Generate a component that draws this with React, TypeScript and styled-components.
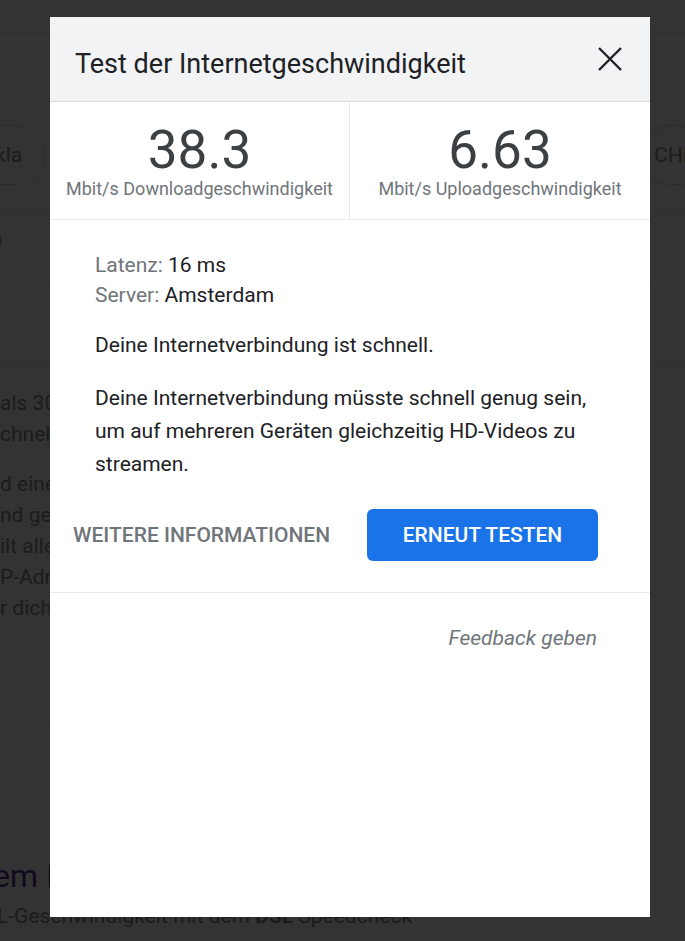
import styled, { createGlobalStyle } from 'styled-components';

const GlobalStyle = createGlobalStyle`
  html, body {
    margin: 0;
    padding: 0;
    background: #ffffff;
    font-family: Roboto, "Liberation Sans", Arial, sans-serif;
  }
  * {
    box-sizing: border-box;
  }
`;

// page behind the dialog
const Page = styled.div`
  width: 685px;
  height: 941px;
  overflow: hidden;
  background: #ffffff;
  color: #8a8a8a;
`;

const Band = styled.div<{ $h: number }>`
  height: ${(p) => p.$h}px;
  border-bottom: 1px solid #e6e6e6;
  display: flex;
  align-items: center;
  justify-content: space-between;
  font-size: 21px;
`;

const Chip = styled.div<{ $side: 'left' | 'right' }>`
  height: 60px;
  border: 1px solid #dcdcdc;
  border-radius: 30px;
  display: flex;
  align-items: center;
  font-size: 21px;
  white-space: nowrap;
  overflow: hidden;
  ${(p) =>
    p.$side === 'left'
      ? 'margin-left: -36px; padding: 0 22px 0 30px;'
      : 'width: 70px; margin-right: -25px; padding-left: 13px;'}
`;

const Paren = styled.span`
  align-self: flex-start;
  margin: 18px 0 0 -5px;
`;

const PageBlock = styled.div`
  height: 359px;
  padding-top: 21px;
  border-bottom: 1px solid #e6e6e6;
`;

const Para = styled.p<{ $gap: number }>`
  margin: ${(p) => p.$gap}px 0 0 0;
  font-size: 21px;
  line-height: 31px;
  white-space: nowrap;
`;

const PageHeading = styled.h2`
  margin: 130px 0 0 -7px;
  font-size: 32px;
  line-height: 40px;
  font-weight: 400;
  color: #5c2d91;
  white-space: nowrap;
`;

const PageSub = styled.div`
  margin: 8px 0 0 -3px;
  font-size: 21px;
  line-height: 25px;
  white-space: nowrap;
  b {
    font-weight: 700;
  }
`;

// dialog
const Overlay = styled.div`
  position: fixed;
  inset: 0;
  background: rgba(0, 0, 0, 0.8);
  display: flex;
  justify-content: flex-start;
  align-items: flex-start;
  padding: 17px 0 0 50px;
`;

const Dialog = styled.div`
  width: 600px;
  height: 900px;
  background: #ffffff;
  display: flex;
  flex-direction: column;
`;

const Header = styled.div`
  height: 85px;
  background: #f1f3f4;
  border-bottom: 1px solid #dadce0;
  display: flex;
  align-items: center;
  justify-content: space-between;
  padding: 0 28px 0 25px;
`;

const Title = styled.h1`
  margin: 10px 0 0 0;
  font-size: 27px;
  font-weight: 400;
  color: #202124;
`;

const CloseButton = styled.button`
  border: 0;
  background: none;
  padding: 0;
  width: 24px;
  height: 24px;
  display: flex;
  align-items: center;
  justify-content: center;
  cursor: pointer;
`;

const Stats = styled.div`
  display: grid;
  grid-template-columns: 1fr 1fr;
  height: 118px;
  border-bottom: 1px solid #e8eaed;
`;

const Stat = styled.div<{ $divider?: boolean }>`
  display: flex;
  flex-direction: column;
  align-items: center;
  padding-top: 21px;
  border-right: ${(p) => (p.$divider ? '1px solid #e8eaed' : 'none')};
`;

const Value = styled.div`
  font-size: 53px;
  line-height: 55px;
  color: #3c4043;
`;

const Unit = styled.div`
  font-size: 18px;
  line-height: 22px;
  color: #70757a;
`;

const Body = styled.div`
  padding: 30px 45px 0 45px;
`;

const MetaLine = styled.div`
  font-size: 21px;
  line-height: 30px;
  color: #202124;
`;

const MetaLabel = styled.span`
  color: #70757a;
`;

const Text = styled.p<{ $top: number }>`
  margin: ${(p) => p.$top}px 0 0 0;
  font-size: 21px;
  line-height: 33px;
  color: #202124;
`;

const Actions = styled.div`
  display: flex;
  align-items: center;
  justify-content: space-between;
  padding: 28px 52px 31px 23px;
  border-bottom: 1px solid #e8eaed;
`;

const TextButton = styled.button`
  border: 0;
  background: none;
  padding: 0;
  font-family: inherit;
  font-size: 21px;
  font-weight: 500;
  color: #70757a;
  text-transform: uppercase;
`;

const PrimaryButton = styled.button`
  width: 231px;
  height: 52px;
  border: 0;
  border-radius: 6px;
  background: #1a73e8;
  color: #ffffff;
  font-family: inherit;
  font-size: 21px;
  font-weight: 500;
  text-transform: uppercase;
`;

const Feedback = styled.div`
  padding: 33px 53px 0 0;
  text-align: right;
  font-size: 21px;
  line-height: 25px;
  font-style: italic;
  color: #70757a;
`;

function CloseIcon() {
  return (
    <svg width="24" height="24" viewBox="0 0 24 24">
      <path d="M1 1L23 23M23 1L1 23" stroke="#202124" strokeWidth="2.4" fill="none" />
    </svg>
  );
}

function BackgroundPage() {
  return (
    <Page>
      <Band $h={33} />
      <Band $h={68} />
      <Band $h={109}>
        <Chip $side="left">kla</Chip>
        <Chip $side="right">CHIP</Chip>
      </Band>
      <Band $h={75}>
        <Paren>)</Paren>
      </Band>
      <Band $h={82} />
      <PageBlock>
        <Para $gap={0}>
          als 30 Mbit/s
          <br />
          chnelles Internet
        </Para>
        <Para $gap={19}>
          d einen Test
          <br />
          nd gemessen
          <br />
          ilt alle Daten
          <br />
          P-Adresse
          <br />
          r dich
        </Para>
      </PageBlock>
      <PageHeading>em Internet</PageHeading>
      <PageSub>
        L-Geschwindigkeit mit dem <b>DSL</b> Speedcheck
      </PageSub>
    </Page>
  );
}

export default function App() {
  return (
    <>
      <GlobalStyle />
      <BackgroundPage />
      <Overlay>
        <Dialog>
          <Header>
            <Title>Test der Internetgeschwindigkeit</Title>
            <CloseButton aria-label="Schließen">
              <CloseIcon />
            </CloseButton>
          </Header>
          <Stats>
            <Stat $divider>
              <Value>38.3</Value>
              <Unit>Mbit/s Downloadgeschwindigkeit</Unit>
            </Stat>
            <Stat>
              <Value>6.63</Value>
              <Unit>Mbit/s Uploadgeschwindigkeit</Unit>
            </Stat>
          </Stats>
          <Body>
            <MetaLine>
              <MetaLabel>Latenz:</MetaLabel> 16 ms
            </MetaLine>
            <MetaLine>
              <MetaLabel>Server:</MetaLabel> Amsterdam
            </MetaLine>
            <Text $top={19}>Deine Internetverbindung ist schnell.</Text>
            <Text $top={20}>
              Deine Internetverbindung müsste schnell genug sein, um auf mehreren Geräten
              gleichzeitig HD-Videos zu streamen.
            </Text>
          </Body>
          <Actions>
            <TextButton>Weitere Informationen</TextButton>
            <PrimaryButton>Erneut testen</PrimaryButton>
          </Actions>
          <Feedback>Feedback geben</Feedback>
        </Dialog>
      </Overlay>
    </>
  );
}
